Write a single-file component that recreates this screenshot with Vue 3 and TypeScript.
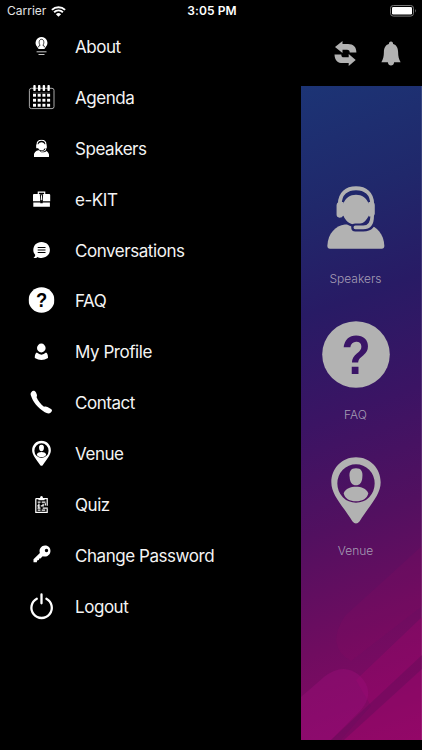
<script setup lang="ts">
interface MenuItem {
  id: string
  label: string
}

interface Tile {
  id: string
  label: string
  width: number
  height: number
}

const menu: MenuItem[] = [
  { id: 'about', label: 'About' },
  { id: 'agenda', label: 'Agenda' },
  { id: 'speakers', label: 'Speakers' },
  { id: 'kit', label: 'e-KIT' },
  { id: 'chat', label: 'Conversations' },
  { id: 'faq', label: 'FAQ' },
  { id: 'profile', label: 'My Profile' },
  { id: 'contact', label: 'Contact' },
  { id: 'venue', label: 'Venue' },
  { id: 'quiz', label: 'Quiz' },
  { id: 'password', label: 'Change Password' },
  { id: 'logout', label: 'Logout' },
]

const tiles: Tile[] = [
  { id: 'speakers', label: 'Speakers', width: 58, height: 65 },
  { id: 'faq', label: 'FAQ', width: 68, height: 67 },
  { id: 'venue', label: 'Venue', width: 50, height: 67 },
]

const columns = [-7, -2.3, 2.4, 7.1]
const rows = [-3, 2, 7]
</script>

<template>
  <div class="screen">
    <svg class="defs" width="0" height="0" aria-hidden="true">
      <defs>
        <mask id="headMask" maskUnits="userSpaceOnUse" x="80" y="46" width="176" height="194">
          <rect x="80" y="46" width="176" height="194" fill="#fff" />
          <path d="M219 149Q214 173 190 173H166" fill="none" stroke="#000" stroke-width="24" stroke-linecap="round" />
        </mask>
        <mask id="bodyMask" maskUnits="userSpaceOnUse" x="80" y="46" width="176" height="194">
          <rect x="80" y="46" width="176" height="194" fill="#fff" />
          <ellipse cx="168" cy="123" rx="46" ry="50" fill="#000" />
          <path d="M217 100V140Q217 173 190 173H166" fill="none" stroke="#000" stroke-width="25" stroke-linecap="round" />
        </mask>
        <symbol id="speakers" viewBox="80 46 176 194">
          <path mask="url(#bodyMask)" d="M81 229C83 190 106 168 134 164H206C230 170 253 193 254 229Q254 238 246 238H89Q81 238 81 229Z" />
          <path mask="url(#headMask)" d="M122 100H130C136 84 150 74 168 74S200 84 206 100H214V138H206C200 154 186 165 168 165S136 154 130 138H122Z" />
          <path d="M119 102C119 70 140 54 168 54S217 70 217 102" fill="none" stroke="currentColor" stroke-width="12" />
          <path d="M130 96V136Q126 144 118 144Q109 142 109 134V106Q110 96 119 96ZM206 96H217Q225 97 225 106V132Q224 139 217 140H206Z" />
          <path d="M217 120V140Q217 173 190 173H166" fill="none" stroke="currentColor" stroke-width="11" stroke-linecap="round" />
        </symbol>
        <symbol id="faq" viewBox="0 0 68 67">
          <ellipse cx="34" cy="33.5" rx="33.8" ry="33.3" />
          <text class="mark" transform="translate(34.1 53) scale(.87 1)" text-anchor="middle">?</text>
        </symbol>
        <symbol id="venue" viewBox="0 0 150 200">
          <path fill-rule="evenodd" d="M75 0C33 0 1 33 1 75C1 112 31 140 64 192Q75 206 86 192C119 140 149 112 149 75C149 33 117 0 75 0ZM75 21A56 58 0 1 1 75 137A56 58 0 1 1 75 21Z" />
          <path d="M75 33C91 33 96 43 94 60C93 76 86 84 75 84S57 76 56 60C54 43 59 33 75 33ZM38 108C44 94 59 89 75 89S106 94 112 108C108 125 93 132 75 132S42 125 38 108Z" />
        </symbol>
      </defs>
    </svg>

    <header class="status">
      <div class="carrier">
        <span>Carrier</span>
        <svg width="15" height="11" viewBox="0 0 15 11">
          <path d="M.9 3.9A9.6 9.6 0 0 1 14.1 3.9M3.1 6.2A6.3 6.3 0 0 1 11.9 6.2" fill="none" stroke="#fff" stroke-width="1.9" />
          <path d="M4.9 8.2Q7.5 6 10.1 8.2L7.5 10.8Z" fill="#fff" />
        </svg>
      </div>
      <span class="time">3:05 PM</span>
      <svg class="battery" width="27" height="12" viewBox="0 0 27 12">
        <rect x=".5" y=".5" width="23" height="10.6" rx="2.8" fill="none" stroke="#777" />
        <rect x="2" y="2" width="20" height="7.6" rx="1.3" fill="#fff" />
        <path d="M25 4Q26.8 5.8 25 7.7Z" fill="#777" />
      </svg>
    </header>

    <div class="body">
      <nav class="drawer">
        <a v-for="item in menu" :key="item.id" class="row">
          <svg class="icon" width="40" height="40" viewBox="-20.5 -20.3 40 40">
            <g v-if="item.id === 'about'">
              <path d="M0-10.4A5.9 5.9 0 0 1 4.2-.4L2.9 1.7H-2.9L-4.2-.4A5.9 5.9 0 0 1 0-10.4Z" />
              <path d="M-2.8 0V-1.2L-1.4-2C-2.9-4-2.7-8 0-8S2.9-4 1.4-2L2.8-1.2V0" fill="none" stroke="#000" stroke-width=".8" />
              <path d="M-4.9 4.5H5M-3 7.2H3" stroke="#ddd" stroke-width=".9" />
            </g>
            <g v-else-if="item.id === 'agenda'">
              <rect x="-12.1" y="-10" width="24.6" height="20.3" rx="2" fill="none" stroke="#bbb" stroke-width=".9" />
              <template v-for="x in columns" :key="x">
                <rect :x="x - 1.2" y="-13.2" width="2.4" height="6" rx=".8" />
                <rect v-for="y in rows" :key="y" :x="x - 1.5" :y="y - 1.5" width="3" height="2.9" />
              </template>
              <path d="M-8.5-5.4H8.6" stroke="#888" stroke-width=".5" />
            </g>
            <use v-else-if="item.id === 'speakers'" href="#speakers" x="-8" y="-9.7" width="16" height="17.6" />
            <g v-else-if="item.id === 'kit'" transform="translate(0 -1)">
              <path d="M-7.6-5.4H7.6Q8.7-5.4 8.7-4.4V2H1.2V.8H-1.2V2H-8.5V-4.4Q-8.5-5.4-7.6-5.4ZM-8.2 3.1H-1.2V4H1.2V3.1H8.4V7.5H-8.2Z" />
              <path d="M-3.2-5V-7.2H3.2V-5" fill="none" stroke="currentColor" stroke-width="1.2" />
              <path d="M-1.7-5H1.7L1 2H-1Z" fill="#000" />
              <path d="M-.6-4H.6L.4 1H-.4Z" />
            </g>
            <g v-else-if="item.id === 'chat'">
              <path d="M0-9.4C5-9.4 8.4-5.8 8.4-1.4S5 6.6 0 6.6C-1.8 6.6-3 6.3-4 5.6C-5 6.6-6.3 7-8 6.7Q-6.3 5.2-6.2 3.6C-7.5 2.3-8.2.6-8.2-1.3C-8.2-5.8-5-9.4 0-9.4Z" />
              <path d="M-3.8-3.8H4M-3.8-1.3H4M-3.8 1.2H4" stroke="#000" stroke-width="1.1" />
            </g>
            <use v-else-if="item.id === 'faq'" href="#faq" x="-13" y="-14.3" width="26" height="26" />
            <g v-else-if="item.id === 'profile'">
              <ellipse cx="-.2" cy="-4.3" rx="4.3" ry="4.4" />
              <path d="M-4.7.3Q0 4.5 4.5.3C6 1.2 6.5 3 6.5 5.8Q0 9.8-6.7 5.8C-6.8 3-6.1 1.2-4.7.3Z" />
            </g>
            <path v-else-if="item.id === 'contact'" d="M-10-11.4C-8.7-13-6.5-12.7-5.5-10.7L-4.7-8.8C-4.3-7.6-4.6-6.7-5-6.2C-3.6-2.6-.7 1.2 2.5 3.5C3.8 3 4.8 3 6 3.7L9.5 5.8C11 6.8 10.7 8 9.3 9.1C7.7 10.7 5.5 10.2 3.3 8.9C-3.5 5-8.7-1.4-10.6-7.7C-11.1-9.4-10.9-10.5-10-11.4Z" />
            <use v-else-if="item.id === 'venue'" href="#venue" x="-9.5" y="-14" width="19" height="26" />
            <g v-else-if="item.id === 'quiz'">
              <path d="M-5.7-6.7H5.7V.5M5.7 3.5V7H-5.7V-6.7" fill="none" stroke="currentColor" stroke-width="1.2" />
              <path d="M-3.1-7.4H-1.5Q-1.4-9.2 0-9.2T1.5-7.4H3.1V-5H-3.1Z" />
              <path d="M-3.8-3.2H-1M.2-3.2H4M-3.8 4.8H-1M.2 4.8H3.7M-4.2.6H-1.8M-.8.6H2.3M-2.6-1.7V2.8M1.6-1.5V1.2M3.8-2V.2M-4 2.9H-1M1.2 2.9H6.3" fill="none" stroke="currentColor" stroke-width="1.25" />
            </g>
            <path v-else-if="item.id === 'password'" fill-rule="evenodd" d="M-1.5-7.6C0-11 4.5-12 7.2-9.5C10-6.8 9.4-2 6-.4C4.3.4 2.8.4 1.2-.1L-1 2.1L-2.3 2.2L-2.6 3.8L-4.4 4.1L-4.7 6H-8V2.9L-1.6-3.4C-2.1-4.8-2.1-6.2-1.5-7.6ZM5-7.5A1.7 1.7 0 1 0 5-4.1A1.7 1.7 0 1 0 5-7.5Z" />
            <path v-else d="M-4.7-8.5A10.2 10.2 0 1 0 4.9-8.5M0-12.8V-4" fill="none" stroke="currentColor" stroke-width="2.3" stroke-linecap="round" />
          </svg>
          <span class="label">{{ item.label }}</span>
        </a>
      </nav>

      <main class="home">
        <div class="toolbar">
          <svg width="23" height="26" viewBox="0 0 23 26">
            <path d="M8.5 0V3H14C19.5 3 22.3 6 22.4 11.4H15.7C15.7 9.6 15 8.8 13 8.8H8.5V12L1 6ZM14.7 25V22.1H9C3.5 22.1.7 19 .5 13.4H7.3C7.3 15.5 8 16.2 10 16.2H14.7V13L21.7 19Z" />
          </svg>
          <svg width="20" height="26" viewBox="0 0 20 26">
            <path d="M10 .5C11.5.5 12.1 1.4 12.1 3C15.7 4 17 7 17.1 11C17.2 15.5 17.7 17.8 19.6 21.2H.4C2.3 17.8 2.8 15.5 2.9 11C3 7 4.3 4 7.9 3C7.9 1.4 8.5.5 10 .5ZM6.8 21H13.2C12.8 23.8 11.7 24.4 10 24.4S7.2 23.8 6.8 21Z" />
          </svg>
        </div>
        <section class="panel">
          <svg class="art" width="121" height="654" viewBox="0 0 121 654" aria-hidden="true">
            <path d="M121 460L44 530Q24 560 50 575L121 520Z" fill="#9a0866" opacity=".13" />
            <path d="M121 531L55 594L70 620L40 654H121Z" fill="#a5086e" opacity=".3" />
            <path d="M0 611L23 591Q42 576 58 589Q76 606 59 625L30 654H0Z" fill="#980e78" opacity=".45" />
            <path d="M121 569L30 654H43L121 583Z" fill="#5e0c58" opacity=".4" />
          </svg>
          <div class="tiles">
            <a v-for="tile in tiles" :key="tile.id" class="tile">
              <svg :width="tile.width" :height="tile.height"><use :href="'#' + tile.id" width="100%" height="100%" /></svg>
              <span>{{ tile.label }}</span>
            </a>
          </div>
        </section>
      </main>
    </div>
  </div>
</template>

<style>
body {
  margin: 0;
  background: #000;
}
</style>

<style scoped>
.screen {
  width: 422px;
  height: 750px;
  overflow: hidden;
  background: #000;
  color: #fff;
  font-family: Inter, "Liberation Sans", sans-serif;
  display: flex;
  flex-direction: column;
}
.defs {
  position: absolute;
}
svg {
  display: block;
  fill: currentColor;
}
.mark {
  font: bold 55px "Liberation Sans", sans-serif;
  fill: var(--hole);
}
.status {
  height: 22px;
  flex: none;
  box-sizing: border-box;
  padding: 0 5px 0 7px;
  display: grid;
  grid-template-columns: 1fr auto 1fr;
  align-items: center;
  font-size: 12px;
  line-height: 22px;
}
.carrier {
  display: flex;
  align-items: center;
  gap: 5px;
  color: #e4e4e4;
}
.time {
  font-weight: 600;
  letter-spacing: 0.1px;
}
.battery {
  justify-self: end;
}
.body {
  flex: 1;
  min-height: 0;
  display: flex;
}
.drawer {
  --hole: #000;
  width: 301px;
  flex: none;
  margin-top: -0.5px;
}
.row {
  height: 50.9px;
  box-sizing: border-box;
  padding-left: 21px;
  display: flex;
  align-items: center;
  gap: 14px;
}
.icon {
  flex: none;
}
.label {
  font-size: 17px;
  line-height: 22px;
  letter-spacing: -0.45px;
  color: #f4f4f4;
  white-space: nowrap;
}
.home {
  width: 121px;
  flex: none;
  color: #b2b2b2;
}
.toolbar {
  height: 64px;
  box-sizing: border-box;
  padding: 19px 21px 0 33px;
  display: flex;
  justify-content: space-between;
}
.panel {
  --hole: #3a1467;
  height: 654px;
  display: grid;
  background: linear-gradient(160deg, #1c3475 0%, #20286b 18%, #281b65 33%, #3b1464 49%, #521060 65%, #700c60 82%, #8c0866 100%);
  box-shadow: inset -1px 0 rgba(255, 255, 255, 0.12);
}
.art,
.tiles {
  grid-area: 1 / 1;
}
.tiles {
  padding: 99.4px 0 0;
  margin-left: -12px;
}
.tile {
  height: 135.8px;
  display: flex;
  flex-direction: column;
  align-items: center;
  justify-content: flex-start;
}
.tile span {
  margin-top: auto;
  margin-bottom: 33.2px;
  font-size: 12px;
  line-height: 18px;
  font-weight: 300;
  color: #a59cb4;
}
</style>
